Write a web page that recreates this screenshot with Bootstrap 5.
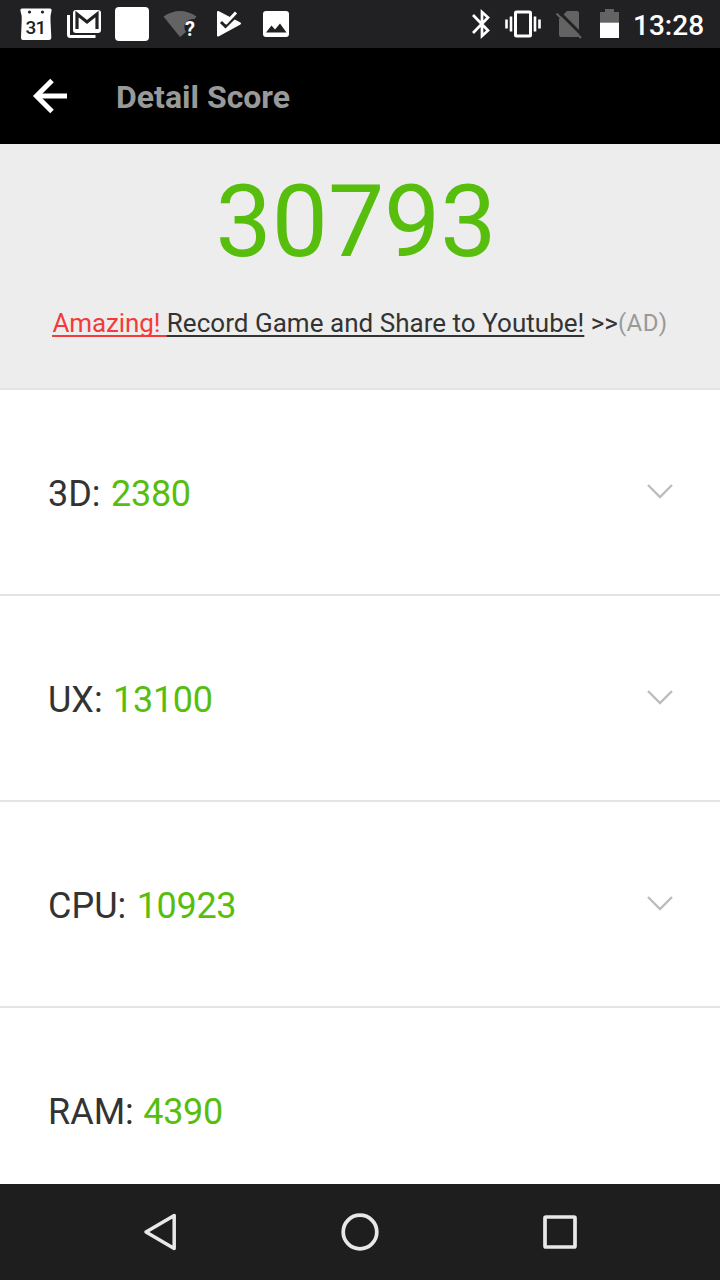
<!DOCTYPE html>
<html lang="en">
<head>
<meta charset="utf-8">
<meta name="viewport" content="width=device-width, initial-scale=1">
<title>Detail Score</title>
<link rel="stylesheet" href="https://cdn.jsdelivr.net/npm/bootstrap@5.3.0/dist/css/bootstrap.min.css">
<style>
body{font-family:Roboto,"Liberation Sans",sans-serif;color:#333;background:#fff}
.screen{height:1280px;width:720px}
svg{display:block;flex:none}
.status-bar{height:48px;background:#212123;padding-left:12px}
.clock{font-size:28px;font-weight:500;line-height:48px;width:87px;padding-top:2px;white-space:nowrap}
.app-bar{height:96px;padding-left:32px;background:#000}
.app-title{font-size:32px;font-weight:700;color:#999;line-height:40px;margin:2px 0 0 48px}
.summary{height:246px;background:#ededed;border-bottom:2px solid #e4e4e4}
.total{font-size:100px;line-height:120px;color:#58be0e;margin-top:18px;padding-right:8px}
.promo{font-size:26px;line-height:32px;margin-top:25px;white-space:nowrap}
.promo a{color:#333;text-decoration-thickness:2px;text-underline-offset:3px;text-decoration-skip-ink:none}
.promo .hot{color:#f43b3b;letter-spacing:-.1px}
.promo .tail{letter-spacing:.03px}
.promo .ad{font-size:24px;color:#999;position:relative;top:-1px;letter-spacing:.4px}
.list-group-flush>.score-row{height:206px;padding:4px 48px 0;border:0;border-bottom:2px solid #e4e4e4;font-size:36px;line-height:44px;color:#333;background:#fff}
.list-group-flush>.score-row:last-child{padding-top:2px}
.score-row .points{color:#58be0e;margin-left:1.5px;letter-spacing:-.3px}
.score-row:last-child .points{margin-left:.5px}
.score-row svg{margin:-4px -1px 0 0}
.nav-keys{height:96px;background:#1e1e1e}
</style>
</head>
<body>
<div class="screen d-flex flex-column overflow-hidden">
  <header class="status-bar d-flex flex-shrink-0 justify-content-between text-white">
    <div class="d-flex">
      <svg width="48" height="48" viewBox="12 0 48 48"><path fill="#fff" d="M22 8.500H50Q52 8.500 51.500 11L50.500 16V21L51.300 37Q51.400 40 49 40H23Q20.800 40 21 37L21.700 21V16L20.500 11Q20 8.500 22 8.500Z"/><circle cx="29.500" cy="12" r="1.600" fill="#212123"/><circle cx="42.500" cy="12" r="1.600" fill="#212123"/><text x="35.500" y="33.500" text-anchor="middle" font-size="19" font-weight="500" letter-spacing="-.8" fill="#212123">31</text></svg>
      <svg width="48" height="48" viewBox="60 0 48 48"><path fill="none" stroke="#fff" stroke-width="3" d="M68.500 15V34.500Q68.500 36.500 70.500 36.500H95.500"/><rect x="73" y="10" width="28" height="23" rx="3" fill="#fff"/><path fill="none" stroke="#212123" stroke-width="3.200" d="M77 29V14L87 22L97 14V29"/></svg>
      <svg width="48" height="48" viewBox="108 0 48 48"><rect x="115" y="7" width="34" height="34" rx="4" fill="#fff"/></svg>
      <svg width="48" height="48" viewBox="156 0 48 48"><path fill="#636363" d="M163.500 16.500Q180 5.500 196.500 16.500L194.500 19Q190.500 18.500 187 21L184.500 25V29L186 32L180 37Z"/><text x="190" y="35.500" text-anchor="middle" font-size="20" font-weight="700" fill="#fff">?</text></svg>
      <svg width="48" height="48" viewBox="204 0 48 48"><path fill="#fff" stroke="#fff" stroke-width="2" stroke-linejoin="round" d="M218 12V35.500L240 23.500Z"/><path fill="none" stroke="#212123" stroke-width="3" d="M221 22L225.500 26.500L238 14"/><path fill="none" stroke="#fff" stroke-width="3" d="M223 19L226.500 22.500L236 12.500"/></svg>
      <svg width="48" height="48" viewBox="252 0 48 48"><rect x="263" y="11" width="26" height="26" rx="3" fill="#fff"/><path fill="#212123" d="M266 32.500L271.500 25.500L275 29.500L280 23.500L286.500 32.500Z"/></svg>
    </div>
    <div class="d-flex">
      <svg width="42" height="48" viewBox="460 0 42 48"><path fill="none" stroke="#fff" stroke-width="2.700" d="M473 15L488 30.500L482 36V12L488 17.500L473 33"/></svg>
      <svg width="46" height="48" viewBox="502 0 46 48"><rect x="515.500" y="12" width="15" height="24" rx="1" fill="none" stroke="#fff" stroke-width="3"/><path stroke="#fff" stroke-width="2.600" d="M506.500 19.500V28.500M511 16.500V31.500M535 16.500V31.500M539.500 19.500V28.500"/></svg>
      <svg width="42" height="48" viewBox="548 0 42 48"><path fill="#636363" d="M567 11H577Q579 11 579 13V35Q579 37 577 37H561Q559 37 559 35V19Z"/><path stroke="#212123" stroke-width="3" d="M558.500 11.500L583 36"/><path stroke="#636363" stroke-width="2.200" d="M556.500 13.500L581 38"/></svg>
      <svg width="43" height="48" viewBox="590 0 43 48"><path fill="#636363" d="M605 9H614V12H619V23H600V12H605Z"/><path fill="#fff" d="M600 22.700H619V38H600Z"/></svg>
      <div class="clock">13:28</div>
    </div>
  </header>
  <nav class="app-bar d-flex flex-shrink-0 align-items-center">
    <svg width="36" height="96" viewBox="32 48 36 96"><path fill="none" stroke="#fff" stroke-width="5" d="M52 80.500L36.500 96L52 111.500"/><path stroke="#fff" stroke-width="5" d="M36 96H67"/></svg>
    <h1 class="app-title">Detail Score</h1>
  </nav>
  <section class="summary flex-shrink-0 text-center">
    <div class="total">30793</div>
    <div class="promo"><a href="#"><span class="hot text-decoration-underline">Amazing! </span><span class="tail">Record Game and Share to Youtube!</span></a> &gt;&gt;<span class="ad">(AD)</span></div>
  </section>
  <main class="list-group list-group-flush flex-grow-1 overflow-hidden">
    <div class="list-group-item score-row d-flex flex-shrink-0 align-items-center justify-content-between"><div>3D: <span class="points">2380</span></div><svg width="26" height="16" viewBox="0 0 26 16"><path fill="none" stroke="#bcbcbc" stroke-width="2.300" d="M1 1L13 13L25 1"/></svg></div>
    <div class="list-group-item score-row d-flex flex-shrink-0 align-items-center justify-content-between"><div>UX: <span class="points">13100</span></div><svg width="26" height="16" viewBox="0 0 26 16"><path fill="none" stroke="#bcbcbc" stroke-width="2.300" d="M1 1L13 13L25 1"/></svg></div>
    <div class="list-group-item score-row d-flex flex-shrink-0 align-items-center justify-content-between"><div>CPU: <span class="points">10923</span></div><svg width="26" height="16" viewBox="0 0 26 16"><path fill="none" stroke="#bcbcbc" stroke-width="2.300" d="M1 1L13 13L25 1"/></svg></div>
    <div class="list-group-item score-row d-flex flex-shrink-0 align-items-center"><div>RAM: <span class="points">4390</span></div></div>
  </main>
  <footer class="nav-keys d-flex flex-shrink-0 justify-content-center">
    <svg width="200" height="96" viewBox="60 1184 200 96"><path fill="none" stroke="#e8e8e8" stroke-width="3.500" stroke-linejoin="round" d="M174.200 1215.500V1248.500L146 1232Z"/></svg>
    <svg width="200" height="96" viewBox="260 1184 200 96"><circle cx="360" cy="1232" r="16.800" fill="none" stroke="#e8e8e8" stroke-width="3.700"/></svg>
    <svg width="200" height="96" viewBox="460 1184 200 96"><rect x="545" y="1217" width="30" height="30" rx="1" fill="none" stroke="#e8e8e8" stroke-width="3.700"/></svg>
  </footer>
</div>
<script src="https://cdn.jsdelivr.net/npm/bootstrap@5.3.0/dist/js/bootstrap.bundle.min.js"></script>
</body>
</html>
